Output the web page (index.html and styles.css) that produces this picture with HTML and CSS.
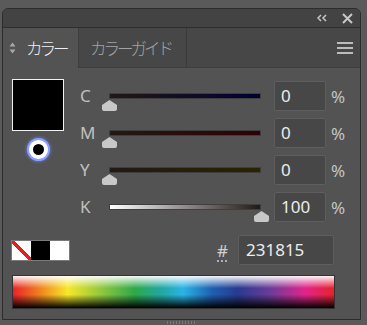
FILE: index.html
```html
<!DOCTYPE html>
<html lang="ja">
<head>
	<meta charset="UTF-8">
	<title>カラー</title>
	<link rel="stylesheet" href="styles.css">
</head>
<body>
	<div class="panel">
		<div class="head">
			<svg class="collapse" width="10" height="8" viewBox="0 0 10 8"><path d="M4 1L1 4L4 7M9 1L6 4L9 7" fill="none" stroke="#c8c8c8" stroke-width="1.5"/></svg>
			<svg class="close" width="11" height="11" viewBox="0 0 11 11"><path d="M1 1L10 10M10 1L1 10" fill="none" stroke="#c8c8c8" stroke-width="2"/></svg>
		</div>
		<div class="tabs">
			<div class="tab on">
				<svg width="7" height="12" viewBox="0 0 7 12"><path d="M3.5 0.5L6.5 4.5H0.5Z M3.5 11.5L6.5 7.5H0.5Z" fill="#a8a8a8"/></svg>
				<span>カラー</span>
			</div>
			<div class="tab">カラーガイド</div>
			<div class="tab-rest">
				<svg width="16" height="12" viewBox="0 0 16 12"><path d="M0 1H16M0 6H16M0 11H16" stroke="#bcbcbc" stroke-width="2"/></svg>
			</div>
		</div>
		<div class="body">
			<div class="top">
				<div class="left">
					<div class="fill"></div>
					<div class="stroke"></div>
				</div>
				<div class="rows">
					<div class="row">
						<span class="lbl">C</span>
						<div class="slider"><div class="bar bar-c"></div><div class="thumb"></div></div>
						<div class="num">0</div>
						<span class="pct">%</span>
					</div>
					<div class="row">
						<span class="lbl">M</span>
						<div class="slider"><div class="bar bar-m"></div><div class="thumb"></div></div>
						<div class="num">0</div>
						<span class="pct">%</span>
					</div>
					<div class="row">
						<span class="lbl">Y</span>
						<div class="slider"><div class="bar bar-y"></div><div class="thumb"></div></div>
						<div class="num">0</div>
						<span class="pct">%</span>
					</div>
					<div class="row">
						<span class="lbl">K</span>
						<div class="slider"><div class="bar bar-k"></div><div class="thumb thumb-end"></div></div>
						<div class="num">100</div>
						<span class="pct">%</span>
					</div>
				</div>
			</div>
			<div class="hexrow">
				<div class="swatches">
					<div class="sw sw-none"></div>
					<div class="sw sw-black"></div>
					<div class="sw sw-white"></div>
				</div>
				<span class="hash">#</span>
				<div class="hex">231815</div>
			</div>
			<div class="spectrum"></div>
		</div>
	</div>
	<div class="grip"></div>
</body>
</html>
```

FILE: styles.css
```css
body,div,span{
	margin:0;
	padding:0;
}
body{
	width:367px;
	height:325px;
	overflow:hidden;
	background:#5a5a5a;
	font-family:"Noto Sans","Noto Sans CJK JP",sans-serif;
	color:#c4c4c4;
	padding-top:8px;
	box-sizing:border-box;
}
.panel{
	margin-left:2px;
	width:359px;
	height:312px;
	box-sizing:border-box;
	border:1px solid #2c2c2c;
	border-radius:6px 6px 0 0;
	background:#535353;
	overflow:hidden;
}
.head{
	height:18px;
	background:#434343;
	border-bottom:1px solid #2e2e2e;
	display:flex;
	align-items:center;
	justify-content:flex-end;
	gap:15px;
	padding-right:7px;
}
.tabs{
	display:flex;
	height:40px;
}
.tab{
	width:108px;
	background:#474747;
	border-bottom:1px solid #3e3e3e;
	border-right:1px solid #3a3a3a;
	display:flex;
	align-items:center;
	padding-left:11px;
	box-sizing:border-box;
	font-family:"Noto Sans CJK JP",sans-serif;
	font-weight:300;
	font-size:16.5px;
	letter-spacing:-3px;
	white-space:nowrap;
	color:#a4a4a4;
}
.tab.on{
	width:76px;
	background:#535353;
	border-bottom:0;
	border-right:1px solid #3e3e3e;
	padding-left:6px;
	gap:10px;
	color:#f0f0f0;
}
.tab-rest{
	flex:1;
	background:#474747;
	border-bottom:1px solid #3e3e3e;
	display:flex;
	align-items:center;
	justify-content:flex-end;
	padding-right:7px;
}
.body{
	padding:11px 0 0 9px;
}
.top{
	display:flex;
	gap:16px;
}
.left{
	width:52px;
	display:flex;
	flex-direction:column;
	align-items:center;
}
.fill{
	width:52px;
	height:52px;
	box-sizing:border-box;
	border:1px solid #f2f2f2;
	background:#000;
}
.stroke{
	margin-top:9px;
	width:11px;
	height:11px;
	border:4px solid #fff;
	border-radius:50%;
	background:#000;
	box-shadow:0 0 0 2px #8aa0ff,0 0 3px 3px rgba(110,140,255,.55);
}
.rows{
	margin-top:2px;
	display:flex;
	flex-direction:column;
	gap:7px;
}
.row{
	display:flex;
	height:30px;
	align-items:center;
}
.lbl{
	width:22px;
	font-size:17px;
	line-height:1;
	margin-top:-3px;
	align-self:flex-start;
	padding-top:9px;
	color:#c0c0c0;
}
.slider{
	position:relative;
	width:162px;
	height:30px;
}
.bar{
	position:absolute;
	left:7px;
	top:12px;
	width:152px;
	height:6px;
	box-sizing:border-box;
	border:1px solid #3e3e3e;
}
.bar-c{background:linear-gradient(to right,#231815,#000033);}
.bar-m{background:linear-gradient(to right,#231815,#2e0008);}
.bar-y{background:linear-gradient(to right,#231815,#2a2300);}
.bar-k{background:linear-gradient(to right,#fff,#231815);}
.thumb{
	position:absolute;
	left:0;
	top:19px;
	width:15px;
	height:11px;
	background:#c8c8c8;
	clip-path:polygon(50% 0,100% 45%,100% 100%,0 100%,0 45%);
	border-radius:2px;
}
.thumb-end{
	left:152px;
}
.num{
	margin-left:10px;
	width:52px;
	height:30px;
	box-sizing:border-box;
	border:1px solid #5e5e5e;
	border-radius:2px;
	background:#474747;
	color:#ececec;
	font-size:17px;
	line-height:28px;
	padding-left:6px;
}
.pct{
	margin-left:5px;
	font-size:17px;
	color:#c4c4c4;
}
.hexrow{
	margin-top:13px;
	display:flex;
	align-items:center;
	height:30px;
}
.swatches{
	display:flex;
	margin-left:-1px;
	border:1px solid #7a7a7a;
}
.sw{
	width:19px;
	height:19px;
}
.sw-none{
	background:linear-gradient(to top right,#fff 43%,#e32020 43%,#e32020 57%,#fff 57%);
}
.sw-black{background:#000;}
.sw-white{background:#fff;}
.hash{
	margin-left:147px;
	font-size:17px;
	color:#d0d0d0;
	text-decoration:underline dotted;
	text-underline-offset:4px;
}
.hex{
	margin-left:10px;
	width:96px;
	height:30px;
	box-sizing:border-box;
	border:1px solid #5e5e5e;
	border-radius:2px;
	background:#474747;
	color:#ececec;
	font-size:17px;
	line-height:28px;
	padding-left:7px;
}
.spectrum{
	margin-top:10px;
	margin-left:0;
	width:323px;
	height:34px;
	box-sizing:border-box;
	border:1px solid #333;
	background:
		linear-gradient(to bottom,rgba(255,255,255,.95) 0%,rgba(255,255,255,0) 38%,rgba(0,0,0,0) 58%,#000 100%),
		linear-gradient(to right,#e8232a,#f08a1f 9%,#f6e82a 17%,#8cc63f 28%,#2ea84a 38%,#23a7a0 46%,#2ab4e6 53%,#1f5fb0 62%,#283a8f 70%,#6a3c98 80%,#e0258c 91%,#e6222c 100%);
}
.grip{
	width:28px;
	height:3px;
	margin:1px 0 0 167px;
	background:repeating-linear-gradient(to right,#7a7a7a 0 1px,transparent 1px 3px);
}
```
